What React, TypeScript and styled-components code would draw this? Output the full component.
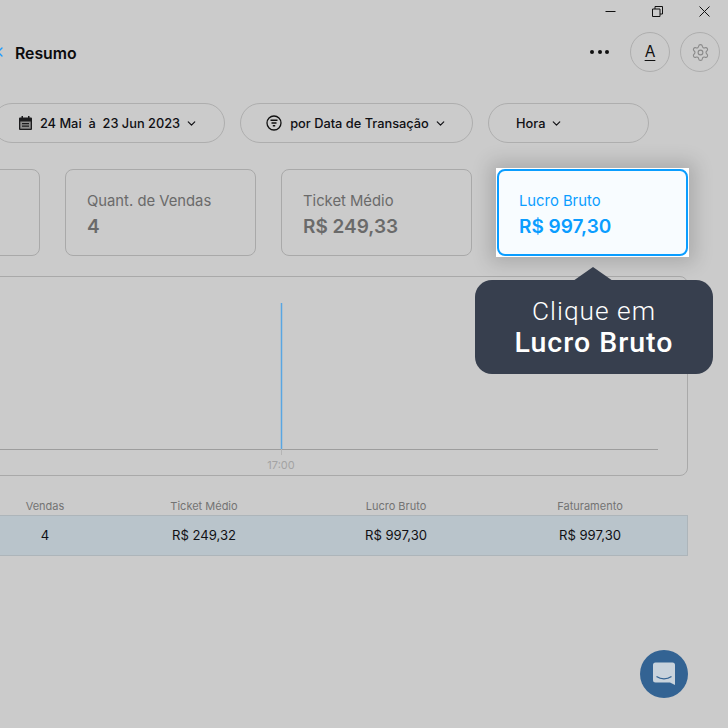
import React from 'react';
import styled, { createGlobalStyle } from 'styled-components';
import { ChevronDown, ChevronLeft, Settings } from 'lucide-react';

const Global = createGlobalStyle`
    html, body {
        margin: 0;
        padding: 0;
        background: #cbcbcb;
    }
    * {
        box-sizing: border-box;
    }
`;

const Page = styled.div`
    position: relative;
    width: 728px;
    height: 728px;
    overflow: hidden;
    background: #cbcbcb;
    font-family: 'Inter', 'Liberation Sans', sans-serif;
    color: #0e0e10;
`;

const WindowBar = styled.div`
    height: 22px;
    padding: 0 18px 0 0;
    display: flex;
    justify-content: flex-end;
    align-items: center;
    gap: 36px;
    svg {
        display: block;
        width: 11px;
        height: 11px;
    }
`;

const Header = styled.div`
    margin-top: 10px;
    height: 40px;
    padding-right: 8px;
    display: flex;
    align-items: center;
`;

const Back = styled.span`
    display: flex;
    width: 15px;
    color: #1a9cff;
    svg {
        margin-left: -8px;
        flex: none;
    }
`;

const Title = styled.h1`
    margin: 2px 0 0;
    flex: 1;
    font-size: 15.8px;
    font-weight: 600;
    color: #0b0b0d;
`;

const Dots = styled.span`
    display: flex;
    gap: 3.5px;
    margin-right: 21px;
    i {
        width: 4px;
        height: 4px;
        border-radius: 50%;
        background: #111;
    }
`;

const RoundButton = styled.button<{ $faded?: boolean }>`
    width: 40px;
    height: 40px;
    margin-left: ${(p) => (p.$faded ? '10px' : '0')};
    padding: 0 0 ${(p) => (p.$faded ? '0' : '2px')};
    display: flex;
    align-items: center;
    justify-content: center;
    background: transparent;
    border: 1px solid #aeaeae;
    border-radius: 50%;
    color: ${(p) => (p.$faded ? '#8a8a8a' : '#111')};
    font-family: inherit;
    font-size: 15.5px;
    span {
        text-decoration: underline;
        text-decoration-color: #111;
        text-underline-offset: 3px;
    }
`;

const Filters = styled.div`
    margin: 31px 0 0 -8px;
    display: flex;
    gap: 15px;
`;

const Pill = styled.div<{ $width: number; $start?: boolean }>`
    width: ${(p) => p.$width}px;
    height: 40px;
    padding: 0 ${(p) => (p.$start ? '27px' : '0')};
    display: flex;
    align-items: center;
    justify-content: ${(p) => (p.$start ? 'flex-start' : 'center')};
    gap: 8px;
    border: 1px solid #aeaeae;
    border-radius: 20px;
    font-size: 12.8px;
    font-weight: 450;
    color: #101014;
    white-space: pre;
    svg {
        flex: none;
    }
`;

const Caret = styled(ChevronDown)`
    width: 13px;
    height: 13px;
    margin-left: -3px;
    stroke-width: 2.2px;
`;

const Cards = styled.div`
    margin: 26px 0 0 -151px;
    display: flex;
    gap: 25px;
`;

const Card = styled.div`
    width: 191px;
    height: 87px;
    padding: 22px 21px;
    border: 1px solid #a9a9a9;
    border-radius: 8px;
    color: #6a6a6a;
`;

const HighlightFrame = styled.div`
    margin: -1px;
    padding: 1px;
    background: #fff;
    box-shadow: 0 0 18px 6px rgba(0, 0, 0, 0.16);
    position: relative;
`;

const HighlightCard = styled(Card)`
    padding: 22px 20px 21px;
    border: 2px solid #0a9dff;
    background: #f8fcff;
    color: #0a9dff;
    div:first-child {
        margin-top: -1px;
    }
`;

const CardLabel = styled.div`
    font-size: 14.8px;
    line-height: 18px;
`;

const CardValue = styled.div`
    margin-top: 5px;
    font-size: 19px;
    line-height: 24px;
    font-weight: 600;
`;

const ChartBox = styled.div`
    margin: 20px 0 0 -151px;
    width: 839px;
    height: 200px;
    border: 1px solid #a9a9a9;
    border-radius: 8px;
    svg {
        display: block;
    }
`;

const TableHead = styled.div`
    margin: 21px 0 0 -18px;
    width: 706px;
    height: 18px;
    display: grid;
    grid-template-columns: 126px 192px 192px 196px;
    align-items: center;
    text-align: center;
    font-size: 11px;
    color: #737373;
`;

const TableRow = styled(TableHead)`
    margin-top: 0;
    height: 41px;
    padding-bottom: 1px;
    background: #b9c4cb;
    border: 1px solid #adb5ba;
    border-left: 0;
    font-size: 13.1px;
    color: #101014;
`;

const Tooltip = styled.div`
    position: absolute;
    left: 475px;
    top: 280px;
    width: 238px;
    height: 94px;
    padding-top: 15px;
    border-radius: 17px;
    background: #373f4e;
    color: #fff;
    text-align: center;
    font-family: 'Roboto', 'Liberation Sans', sans-serif;
    font-size: 26.3px;
    font-weight: 300;
    line-height: 32px;
    letter-spacing: 1px;
    &::before {
        content: '';
        position: absolute;
        left: 98px;
        top: -13px;
        width: 40px;
        height: 14px;
        background: #373f4e;
        clip-path: polygon(50% 0, 100% 100%, 0 100%);
    }
    strong {
        display: block;
        font-size: 28.5px;
        font-weight: 500;
    }
`;

const ChatButton = styled.div`
    position: absolute;
    left: 640px;
    top: 650px;
    width: 48px;
    height: 48px;
    display: flex;
    align-items: center;
    justify-content: center;
    border-radius: 50%;
    background: #336393;
`;

const WindowIcon = ({ d }: { d: string }) => (
    <svg viewBox="0 0 11 11" fill="none" stroke="#111" strokeWidth="1">
        <path d={d} />
    </svg>
);

const CalendarIcon = () => (
    <svg width="13" height="14" viewBox="0 0 13 14">
        <path
            d="M2.500 0h1.500v1.500h5V0h1.500v1.500h1.500a1 1 0 0 1 1 1V13a1 1 0 0 1-1 1H1a1 1 0 0 1-1-1V2.500a1 1 0 0 1 1-1h1.500z"
            fill="#1c1c1e"
        />
        <rect x="1.300" y="5.500" width="10.400" height="7.200" fill="#8e8e8e" />
        <path d="M3 7h7v1.300H3zM3 9.500h7v1.300H3z" fill="#1c1c1e" />
    </svg>
);

const FilterIcon = () => (
    <svg width="16" height="16" viewBox="0 0 16 16" fill="none" stroke="#111" strokeWidth="1.300">
        <circle cx="8" cy="8" r="7" />
        <path d="M4.500 5.300h7M5.500 8h5M6.800 10.700h2.400" strokeWidth="1.500" />
    </svg>
);

const metrics = [
    { label: 'Quant. de Vendas', value: '4' },
    { label: 'Ticket Médio', value: 'R$ 249,33' },
];

const columns = ['Vendas', 'Ticket Médio', 'Lucro Bruto', 'Faturamento'];
const values = ['4', 'R$ 249,32', 'R$ 997,30', 'R$ 997,30'];

export default function App() {
    return (
        <Page>
            <Global />
            <WindowBar>
                <WindowIcon d="M0.500 5.500h10" />
                <WindowIcon d="M0.500 3h7.500v7.500H0.500zM3 3V0.500h7.500V8H8" />
                <WindowIcon d="M0.500 0.500l10 10M10.500 0.500l-10 10" />
            </WindowBar>
            <Header>
                <Back>
                    <ChevronLeft size={16} strokeWidth={2} />
                </Back>
                <Title>Resumo</Title>
                <Dots>
                    <i />
                    <i />
                    <i />
                </Dots>
                <RoundButton>
                    <span>A</span>
                </RoundButton>
                <RoundButton $faded>
                    <Settings size={19} strokeWidth={1.4} />
                </RoundButton>
            </Header>
            <Filters>
                <Pill $width={233}>
                    <CalendarIcon />
                    <span>24 Mai  à  23 Jun 2023</span>
                    <Caret />
                </Pill>
                <Pill $width={233}>
                    <FilterIcon />
                    <span>por Data de Transação</span>
                    <Caret />
                </Pill>
                <Pill $width={161} $start>
                    <span>Hora</span>
                    <Caret />
                </Pill>
            </Filters>
            <Cards>
                <Card />
                {metrics.map((m) => (
                    <Card key={m.label}>
                        <CardLabel>{m.label}</CardLabel>
                        <CardValue>{m.value}</CardValue>
                    </Card>
                ))}
                <HighlightFrame>
                    <HighlightCard>
                        <CardLabel>Lucro Bruto</CardLabel>
                        <CardValue>R$ 997,30</CardValue>
                    </HighlightCard>
                </HighlightFrame>
            </Cards>
            <ChartBox>
                <svg width="837" height="198" viewBox="0 0 837 198">
                    <path d="M0 172.500H808" stroke="#9d9d9d" fill="none" />
                    <path d="M431.500 172v6" stroke="#b5b5b5" fill="none" />
                    <path d="M431.500 26v146" stroke="#58a6e2" strokeWidth="1.500" fill="none" />
                    <text
                        x="431"
                        y="192"
                        textAnchor="middle"
                        fontSize="11"
                        fill="#a3a3a3"
                        fontFamily="Inter, sans-serif"
                    >
                        17:00
                    </text>
                </svg>
            </ChartBox>
            <TableHead>
                {columns.map((c) => (
                    <span key={c}>{c}</span>
                ))}
            </TableHead>
            <TableRow>
                {values.map((v, i) => (
                    <span key={i}>{v}</span>
                ))}
            </TableRow>
            <Tooltip>
                Clique em
                <strong>Lucro Bruto</strong>
            </Tooltip>
            <ChatButton>
                <svg width="24" height="26" viewBox="0 0 24 26">
                    <path
                        d="M3.500 1.500h17a2.500 2.500 0 0 1 2.500 2.500v20l-5-2.500H3.500A2.500 2.500 0 0 1 1 19V4a2.500 2.500 0 0 1 2.500-2.500z"
                        fill="#c9d3dc"
                    />
                    <path d="M4.500 15.500c4.500 3 10.500 3 15 0" stroke="#336393" strokeWidth="1.400" fill="none" />
                </svg>
            </ChatButton>
        </Page>
    );
}
